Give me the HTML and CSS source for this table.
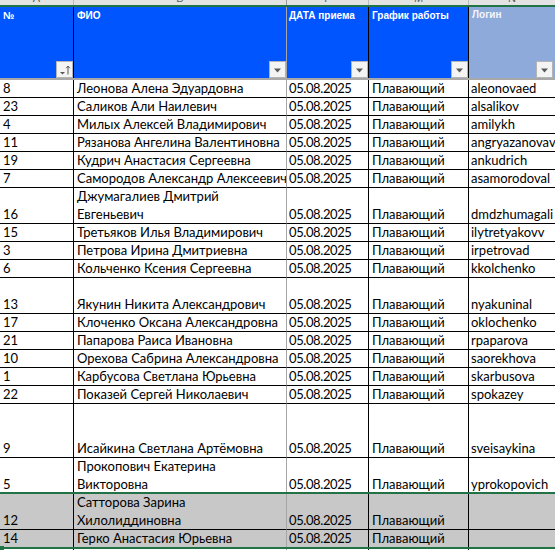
FILE: index.html
```html
<!DOCTYPE html>
<html lang="ru">
<head>
<meta charset="utf-8">
<title>Лист</title>
<link rel="stylesheet" href="styles.css">
</head>
<body>
<div class="sheet">
  <div class="row letters">
    <div class="lt"><span>A</span></div>
    <div class="lt lt-b"><span>B</span></div>
    <div class="lt"><span>F</span></div>
    <div class="lt"><span>M</span></div>
    <div class="lt lt-n"><span>N</span></div>
  </div>

  <div class="row head">
    <div class="hc c-a"><span class="ht">№</span><span class="fb"><svg width="15" height="15" viewBox="0 0 15 15"><path d="M3 10h5l-2.5 2.5z" fill="#595959"/><path d="M11 4v8.5M9.2 6.2L11 4l1.8 2.2" stroke="#595959" stroke-width="1" fill="none"/></svg></span></div>
    <div class="hc c-b"><span class="ht">ФИО</span><span class="fb"><svg width="15" height="15" viewBox="0 0 15 15"><path d="M4 6.5h7l-3.5 4z" fill="#595959"/></svg></span></div>
    <div class="hc c-f"><span class="ht">ДАТА приема</span><span class="fb"><svg width="15" height="15" viewBox="0 0 15 15"><path d="M4 6.5h7l-3.5 4z" fill="#595959"/></svg></span></div>
    <div class="hc c-m"><span class="ht">График работы</span><span class="fb"><svg width="15" height="15" viewBox="0 0 15 15"><path d="M4 6.5h7l-3.5 4z" fill="#595959"/></svg></span></div>
    <div class="hc c-n"><span class="ht">Логин</span><span class="fb"><svg width="15" height="15" viewBox="0 0 15 15"><path d="M4 6.5h7l-3.5 4z" fill="#595959"/></svg></span></div>
  </div>

  <div class="row r1"><div class="c c-a">8</div><div class="c c-b">Леонова Алена Эдуардовна</div><div class="c c-f">05.08.2025</div><div class="c c-m">Плавающий</div><div class="c c-n">aleonovaed</div></div>
  <div class="row r1"><div class="c c-a">23</div><div class="c c-b">Саликов Али Наилевич</div><div class="c c-f">05.08.2025</div><div class="c c-m">Плавающий</div><div class="c c-n">alsalikov</div></div>
  <div class="row r1"><div class="c c-a">4</div><div class="c c-b">Милых Алексей Владимирович</div><div class="c c-f">05.08.2025</div><div class="c c-m">Плавающий</div><div class="c c-n">amilykh</div></div>
  <div class="row r1"><div class="c c-a">11</div><div class="c c-b">Рязанова Ангелина Валентиновна</div><div class="c c-f">05.08.2025</div><div class="c c-m">Плавающий</div><div class="c c-n">angryazanovav</div></div>
  <div class="row r1"><div class="c c-a">19</div><div class="c c-b">Кудрич Анастасия Сергеевна</div><div class="c c-f">05.08.2025</div><div class="c c-m">Плавающий</div><div class="c c-n">ankudrich</div></div>
  <div class="row r1"><div class="c c-a">7</div><div class="c c-b">Самородов Александр Алексеевич</div><div class="c c-f">05.08.2025</div><div class="c c-m">Плавающий</div><div class="c c-n">asamorodoval</div></div>
  <div class="row r2"><div class="c c-a">16</div><div class="c c-b">Джумагалиев Дмитрий<br>Евгеньевич</div><div class="c c-f">05.08.2025</div><div class="c c-m">Плавающий</div><div class="c c-n">dmdzhumagali</div></div>
  <div class="row r1"><div class="c c-a">15</div><div class="c c-b">Третьяков Илья Владимирович</div><div class="c c-f">05.08.2025</div><div class="c c-m">Плавающий</div><div class="c c-n">ilytretyakovv</div></div>
  <div class="row r1"><div class="c c-a">3</div><div class="c c-b">Петрова Ирина Дмитриевна</div><div class="c c-f">05.08.2025</div><div class="c c-m">Плавающий</div><div class="c c-n">irpetrovad</div></div>
  <div class="row r1"><div class="c c-a">6</div><div class="c c-b">Кольченко Ксения Сергеевна</div><div class="c c-f">05.08.2025</div><div class="c c-m">Плавающий</div><div class="c c-n">kkolchenko</div></div>
  <div class="row r2"><div class="c c-a">13</div><div class="c c-b">Якунин Никита Александрович</div><div class="c c-f">05.08.2025</div><div class="c c-m">Плавающий</div><div class="c c-n">nyakuninal</div></div>
  <div class="row r1"><div class="c c-a">17</div><div class="c c-b">Клоченко Оксана Александровна</div><div class="c c-f">05.08.2025</div><div class="c c-m">Плавающий</div><div class="c c-n">oklochenko</div></div>
  <div class="row r1"><div class="c c-a">21</div><div class="c c-b">Папарова Раиса Ивановна</div><div class="c c-f">05.08.2025</div><div class="c c-m">Плавающий</div><div class="c c-n">rpaparova</div></div>
  <div class="row r1"><div class="c c-a">10</div><div class="c c-b">Орехова Сабрина Александровна</div><div class="c c-f">05.08.2025</div><div class="c c-m">Плавающий</div><div class="c c-n">saorekhova</div></div>
  <div class="row r1"><div class="c c-a">1</div><div class="c c-b">Карбусова Светлана Юрьевна</div><div class="c c-f">05.08.2025</div><div class="c c-m">Плавающий</div><div class="c c-n">skarbusova</div></div>
  <div class="row r1"><div class="c c-a">22</div><div class="c c-b">Показей Сергей Николаевич</div><div class="c c-f">05.08.2025</div><div class="c c-m">Плавающий</div><div class="c c-n">spokazey</div></div>
  <div class="row r3"><div class="c c-a">9</div><div class="c c-b">Исайкина Светлана Артёмовна</div><div class="c c-f">05.08.2025</div><div class="c c-m">Плавающий</div><div class="c c-n">sveisaykina</div></div>
  <div class="row r2"><div class="c c-a">5</div><div class="c c-b">Прокопович Екатерина<br>Викторовна</div><div class="c c-f">05.08.2025</div><div class="c c-m">Плавающий</div><div class="c c-n">yprokopovich</div></div>

  <div class="selection">
    <div class="row r2"><div class="c c-a">12</div><div class="c c-b">Сатторова Зарина<br>Хилолиддиновна</div><div class="c c-f">05.08.2025</div><div class="c c-m">Плавающий</div><div class="c c-n"></div></div>
    <div class="row r1"><div class="c c-a">14</div><div class="c c-b">Герко Анастасия Юрьевна</div><div class="c c-f">05.08.2025</div><div class="c c-m">Плавающий</div><div class="c c-n"></div></div>
    <span class="handle"></span>
  </div>

  <div class="row r1 tail"><div class="c c-a"></div><div class="c c-b"></div><div class="c c-f"></div><div class="c c-m"></div><div class="c c-n"></div></div>
</div>
</body>
</html>
```

FILE: styles.css
```css
html, body {
  margin: 0;
  padding: 0;
  background: #ffffff;
}

body {
  width: 555px;
  height: 550px;
  overflow: hidden;
  font-family: "Lato", "Roboto", "Liberation Sans", sans-serif;
}

.sheet {
  width: 555px;
}

.row {
  display: grid;
  grid-template-columns: 74px 213px 82px 100px 86px;
}

/* column letters bar */
.letters {
  height: 7px;
  box-sizing: border-box;
  background: #e3e3e3;
  border-bottom: 2px solid #217346;
  overflow: hidden;
}

.lt {
  height: 5px;
  overflow: hidden;
  text-align: center;
  border-right: 1px solid #bcbcbc;
  box-sizing: border-box;
}

.lt-b { border-right-color: #9a9a9a; }
.lt-n { border-right: none; }

.lt span {
  display: block;
  margin-top: -8px;
  font: 11px/12px "Liberation Sans", sans-serif;
  color: #5b5b5b;
}

/* header row */
.head {
  height: 73px;
  box-sizing: border-box;
  border-bottom: 2px solid #a8a8a8;
}

.hc {
  background: #0055ff;
  color: #ffffff;
  font: bold 10px/12px "Liberation Sans", sans-serif;
  display: flex;
  flex-direction: column;
  justify-content: space-between;
  align-items: flex-start;
  padding: 3px 0 0 3px;
  border-right: 1px solid #000000;
  box-sizing: border-box;
  min-width: 0;
}

.hc.c-b { border-right-color: #a6a6a6; }
.hc.c-f { padding-left: 2px; }
.hc.c-n {
  background: #8eaadb;
  color: #f4f6fb;
  border-right: none;
  padding-top: 2px;
}

.fb {
  align-self: flex-end;
  width: 17px;
  height: 17px;
  box-sizing: border-box;
  border: 1px solid #b4b4b4;
  background: #f4f4f4;
  display: flex;
}

.hc.c-n .fb { margin-right: 2px; }

/* body rows */
.r1 { height: 18px; }
.r2 { height: 36px; }
.r3 { height: 54px; }

.c {
  box-sizing: border-box;
  border-right: 1px solid #000000;
  border-bottom: 1px solid #000000;
  display: flex;
  align-items: flex-end;
  padding-left: 3px;
  font-size: 13px;
  line-height: 18px;
  color: #000000;
  white-space: nowrap;
  overflow: hidden;
  min-width: 0;
}

.c.c-b { border-right-color: #a6a6a6; }
.c.c-f { padding-left: 2px; letter-spacing: -0.4px; }
.c.c-n { padding-left: 2px; border-right: none; }

/* selected rows */
.selection {
  position: relative;
}

.selection .c {
  background: #c8c8c8;
}

.selection::before,
.selection::after {
  content: "";
  position: absolute;
  left: 0;
  right: 0;
  height: 2px;
  background: #217346;
}

.selection::before { top: -2px; }
.selection::after { bottom: -1px; }

.handle {
  position: absolute;
  left: 0;
  bottom: -2px;
  width: 4px;
  height: 4px;
  background: #217346;
  z-index: 1;
}
```
